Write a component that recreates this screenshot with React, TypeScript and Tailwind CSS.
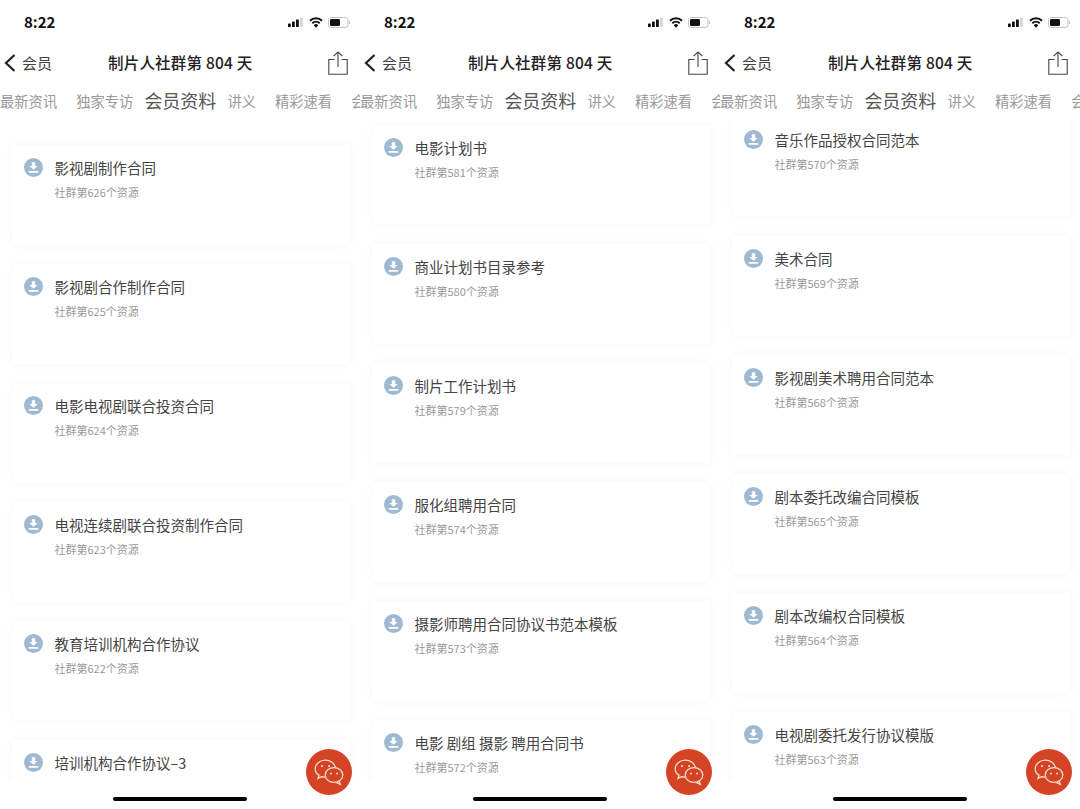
import React from "react";

type Resource = { title: string; count: number };

const columns: { offset: string; items: Resource[] }[] = [
  {
    offset: "pt-[23px]",
    items: [
      { title: "影视剧制作合同", count: 626 },
      { title: "影视剧合作制作合同", count: 625 },
      { title: "电影电视剧联合投资合同", count: 624 },
      { title: "电视连续剧联合投资制作合同", count: 623 },
      { title: "教育培训机构合作协议", count: 622 },
      { title: "培训机构合作协议–3", count: 621 },
    ],
  },
  {
    offset: "pt-[3px]",
    items: [
      { title: "电影计划书", count: 581 },
      { title: "商业计划书目录参考", count: 580 },
      { title: "制片工作计划书", count: 579 },
      { title: "服化组聘用合同", count: 574 },
      { title: "摄影师聘用合同协议书范本模板", count: 573 },
      { title: "电影 剧组 摄影 聘用合同书", count: 572 },
    ],
  },
  {
    offset: "-mt-[5px]",
    items: [
      { title: "音乐作品授权合同范本", count: 570 },
      { title: "美术合同", count: 569 },
      { title: "影视剧美术聘用合同范本", count: 568 },
      { title: "剧本委托改编合同模板", count: 565 },
      { title: "剧本改编权合同模板", count: 564 },
      { title: "电视剧委托发行协议模版", count: 563 },
    ],
  },
];

function StatusIcons() {
  return (
    <div className="flex items-center gap-[5px]">
      <svg width="16" height="10" viewBox="0 0 16 10">
        <rect x="0" y="6.5" width="2.800" height="3.500" rx="0.600" fill="#111" />
        <rect x="4" y="4.500" width="2.800" height="5.500" rx="0.600" fill="#111" />
        <rect x="8" y="2.500" width="2.800" height="7.500" rx="0.600" fill="#111" />
        <rect x="12" y="0.500" width="2.800" height="9.500" rx="0.600" fill="#d6d6d6" />
      </svg>
      <svg width="14" height="11" viewBox="0 0 14 11">
        <path d="M1 3.800a8.600 8.600 0 0 1 12 0" fill="none" stroke="#111" strokeWidth="2" />
        <path d="M3.300 6.300a5.400 5.400 0 0 1 7.400 0" fill="none" stroke="#111" strokeWidth="2" />
        <path d="M7 10.800 4.700 8.200a3.200 3.200 0 0 1 4.600 0z" fill="#111" />
      </svg>
      <svg width="23" height="11" viewBox="0 0 23 11">
        <rect x="0.500" y="0.500" width="19.500" height="10" rx="2.600" fill="none" stroke="#c4c4c4" />
        <rect x="2" y="2" width="10" height="7" rx="1.200" fill="#111" />
        <path d="M21 3.800c1 .3 1.400.9 1.400 1.700s-.4 1.400-1.400 1.700z" fill="#c4c4c4" />
      </svg>
    </div>
  );
}

function ShareIcon() {
  return (
    <svg width="20" height="24" viewBox="0 0 20 24" fill="none" stroke="#444" strokeWidth="1.100">
      <path d="M6.500 8.500H.8v14.700h18.400V8.500h-5.700" />
      <path d="M10 16V1M5.800 5 10 .9 14.200 5" />
    </svg>
  );
}

function DownloadBadge() {
  return (
    <svg width="19" height="19" viewBox="0 0 19 19" className="shrink-0">
      <circle cx="9.500" cy="9.500" r="9.500" fill="#9fb9d3" />
      <path d="M7.800 4.300h3.400v3.600h2.500L9.500 11.700 5.300 7.900h2.500z" fill="#fff" />
      <rect x="4.600" y="13" width="9.800" height="1.700" rx="0.800" fill="#fff" />
    </svg>
  );
}

function WechatIcon() {
  return (
    <svg width="30" height="27" viewBox="0 0 30 27" fill="none" stroke="#f8dccf" strokeWidth="1.300">
      <path d="M11 18.100c-1.200 0-2.400-.2-3.500-.5l-3.400 1.800.9-3C2.700 14.800 1.200 12.400 1.200 9.700 1.200 5 5.800 1.200 11.500 1.200c4.900 0 9.100 3.100 10.100 7.300" />
      <ellipse cx="20" cy="16" rx="8.800" ry="7.400" />
      <path d="m25 22 1.400 3.500-4.300-2.200" />
      <circle cx="8" cy="7" r="1.100" fill="#f8dccf" stroke="none" />
      <circle cx="15" cy="7" r="1.100" fill="#f8dccf" stroke="none" />
      <circle cx="17" cy="14.500" r="1" fill="#f8dccf" stroke="none" />
      <circle cx="23" cy="14.500" r="1" fill="#f8dccf" stroke="none" />
    </svg>
  );
}

function ResourceCard({ item }: { item: Resource }) {
  return (
    <div className="flex h-[100px] shrink-0 items-start gap-[11.500px] rounded-[3px] bg-white pl-[12px] pt-[13px] shadow-[0_0_9px_rgba(0,0,0,0.04)]">
      <DownloadBadge />
      <div className="min-w-0">
        <div className="text-[14.500px] leading-[19px] whitespace-nowrap text-[#444]">{item.title}</div>
        <div className="mt-[7px] text-[11px] leading-[16px] text-[#999]">社群第{item.count}个资源</div>
      </div>
    </div>
  );
}

function Phone({ offset, items }: { offset: string; items: Resource[] }) {
  return (
    <div className="relative flex h-[809px] w-[360px] shrink-0 flex-col overflow-hidden bg-white">
      <div className="flex h-[44px] shrink-0 items-center justify-between pl-[24px] pr-[9px]">
        <span className="text-[15px] font-semibold text-[#111]">8:22</span>
        <StatusIcons />
      </div>
      <div className="relative flex h-[38px] shrink-0 items-center justify-between pl-[4px] pr-[12px]">
        <div className="flex items-center gap-[6px]">
          <svg width="12" height="18" viewBox="0 0 12 18" fill="none" stroke="#222" strokeWidth="2.200">
            <path d="M10.500 1 2 9l8.500 8" />
          </svg>
          <span className="text-[15px] text-[#444]">会员</span>
        </div>
        <span className="absolute left-[108px] text-[15.500px] font-medium tracking-[0.2px] whitespace-nowrap text-[#222]">制片人社群第 804 天</span>
        <ShareIcon />
      </div>
      <div className="flex h-[38px] shrink-0 items-center gap-[19px] pb-[1px] whitespace-nowrap text-[14.300px] text-[#999]">
        <span>最新资讯</span>
        <span>独家专访</span>
        <span className="-mx-[8px] text-[18px] text-[#555]">会员资料</span>
        <span>讲义</span>
        <span>精彩速看</span>
        <span>会员</span>
      </div>
      <div className="mt-[2px] h-[658px] shrink-0 overflow-hidden">
        <div className={`flex flex-col gap-[19px] pl-[12px] pr-[10px] ${offset}`}>
          {items.map((item) => (
            <ResourceCard item={item} key={item.count} />
          ))}
        </div>
      </div>
      <div className="flex flex-1 items-start justify-center pt-[17px]">
        <div className="h-[4px] w-[134px] rounded-full bg-black" />
      </div>
      <div className="absolute left-[306px] top-[749px] flex h-[46px] w-[46px] items-center justify-center rounded-full bg-[#d54325]">
        <WechatIcon />
      </div>
    </div>
  );
}

export default function App() {
  return (
    <div className="flex h-[809px] w-[1080px] overflow-hidden bg-white font-['Noto_Sans_CJK_SC','Liberation_Sans',sans-serif]">
      {columns.map((col) => (
        <Phone items={col.items} key={col.items[0].count} offset={col.offset} />
      ))}
    </div>
  );
}
